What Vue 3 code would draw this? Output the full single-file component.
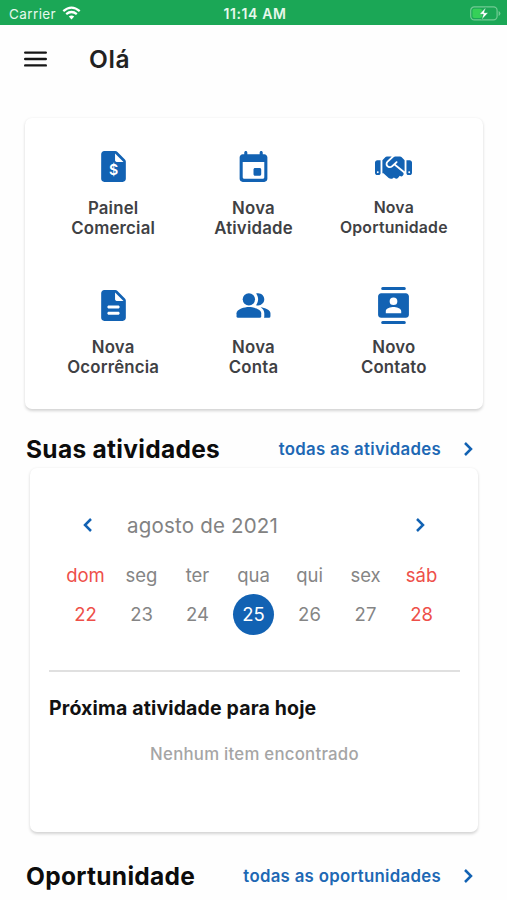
<template>
  <div class="app_container">
    <div class="status_bar">
      <div class="carrier">
        <span>Carrier</span>
        <svg class="wifi" viewBox="0 0 19 14">
          <path d="M9.5 13.6 12.2 10.6Q9.5 8.4 6.8 10.6Z" />
          <path class="arc" d="M4.2 8.2Q9.5 3.9 14.8 8.2M1.3 5.1Q9.5 -1.9 17.7 5.1" />
        </svg>
      </div>
      <div class="clock">11:14 AM</div>
      <div class="battery_box">
        <svg class="battery" viewBox="0 0 31 15">
          <rect class="shell" x=".7" y=".9" width="26.4" height="13" rx="3.6" />
          <path class="cap" d="M28.6 5v5q1.8-.6 1.8-2.5T28.6 5z" />
          <rect class="level" x="2.5" y="2.7" width="9.5" height="9.4" rx="1.8" />
          <path class="bolt" d="M15.8 1.4 9.4 8.3h3.9l-1.7 5.5 6.6-7.1h-4z" />
        </svg>
      </div>
    </div>

    <div class="header">
      <svg class="menu" viewBox="0 0 23 16">
        <path d="M1.2 1.6h20.6M1.2 8h20.6M1.2 14.4h20.6" />
      </svg>
      <h1>Olá</h1>
    </div>

    <div class="card shortcuts">
      <div class="shortcut" v-for="i in shortcuts" :key="i.icon">
        <svg class="icon" :viewBox="i.box || '0 0 24 24'">
          <path v-for="d in i.paths" :d="d" fill-rule="evenodd" />
          <text v-if="i.sign" x="12.1" y="17.6">{{ i.sign }}</text>
        </svg>
        <div class="label" :class="{ small: i.small }">{{ i.first }}<br />{{ i.second }}</div>
      </div>
    </div>

    <div class="section_title">
      <h2>Suas atividades</h2>
      <a>todas as atividades</a>
      <svg class="chevron" viewBox="0 0 10 16"><path d="M2 2l6 6-6 6" /></svg>
    </div>

    <div class="card agenda">
      <div class="month_row">
        <svg class="chevron" viewBox="0 0 10 16"><path d="M8 2L2 8l6 6" /></svg>
        <span class="month">agosto de 2021</span>
        <svg class="chevron" viewBox="0 0 10 16"><path d="M2 2l6 6-6 6" /></svg>
      </div>
      <div class="week">
        <div class="day" :class="{ weekend: d.weekend }" v-for="d in days" :key="d.num">
          <span class="day_name">{{ d.name }}</span>
          <span class="day_num" :class="{ active: d.num == selected }" @click="selected = d.num">{{ d.num }}</span>
        </div>
      </div>
      <div class="next_box">
        <h3>Próxima atividade para hoje</h3>
        <p>Nenhum item encontrado</p>
      </div>
    </div>

    <div class="section_title last">
      <h2>Oportunidade</h2>
      <a>todas as oportunidades</a>
      <svg class="chevron" viewBox="0 0 10 16"><path d="M2 2l6 6-6 6" /></svg>
    </div>
  </div>
</template>

<script setup>
import { ref } from 'vue';

const selected = ref(25)

const days = ['dom', 'seg', 'ter', 'qua', 'qui', 'sex', 'sáb'].map((name, i) => ({
  name,
  num: 22 + i,
  weekend: i == 0 || i == 6
}))

const sheet = 'M19.41 7.41l-4.83-4.83c-.37-.37-.88-.58-1.41-.58H6c-1.1 0-1.99.9-1.99 2L4 20c0 1.1.89 2 1.99 2H18c1.1 0 2-.9 2-2V8.83c0-.53-.21-1.04-.59-1.42z'
const fold = 'M13 8V3.5L18.5 9H14c-.55 0-1-.45-1-1z'

const shortcuts = [
  { icon: 'quote', first: 'Painel', second: 'Comercial', sign: '$', paths: [sheet + fold] },
  {
    icon: 'event', first: 'Nova', second: 'Atividade',
    paths: ['M16 13h-3c-.55 0-1 .45-1 1v3c0 .55.45 1 1 1h3c.55 0 1-.45 1-1v-3c0-.55-.45-1-1-1zm0-10v1H8V3c0-.55-.45-1-1-1s-1 .45-1 1v1H5c-1.11 0-1.99.9-1.99 2L3 20c0 1.1.89 2 2 2h14c1.1 0 2-.9 2-2V6c0-1.1-.9-2-2-2h-1V3c0-.55-.45-1-1-1s-1 .45-1 1zm2 17H6c-.55 0-1-.45-1-1V9h14v10c0 .55-.45 1-1 1z']
  },
  {
    icon: 'handshake', first: 'Nova', second: 'Oportunidade', small: true, box: '0 -84 640 640',
    paths: [
      'M434.7 64h-85.9c-8 0-15.7 3-21.6 8.4l-98.3 90c-.1.1-.2.3-.3.4-16.6 15.6-16.3 40.5-2.1 56 12.7 13.9 39.4 17.6 56.1 2.7.1-.1.3-.1.4-.2l79.9-73.2c6.5-5.9 16.7-5.5 22.6 1 6 6.5 5.5 16.6-1 22.6l-26.1 23.9L504 313.8c2.9 2.4 5.5 5 7.9 7.7V128l-54.6-54.6c-5.9-6-14.1-9.4-22.6-9.4z',
      'M483.9 338.7L334.6 217.5l-30 27.5c-29.7 27.1-75.2 24.5-101.7-4.4-26.9-29.4-24.8-74.9 4.4-101.7L289.1 64h-83.8c-8.5 0-16.6 3.4-22.6 9.4L128 128v223.9h18.3l90.5 81.9c27.4 22.3 67.7 18.1 90-9.3l.2-.2 17.9 15.5c15.9 13 39.4 10.5 52.3-5.4l31.4-38.6 5.4 4.4c13.7 11.1 33.9 9.1 45-4.7l9.5-11.7c11.2-13.8 9.1-33.9-4.6-45.1z',
      'M544 128.2v223.9c0 17.7 14.3 32 32 32h24c22 0 40-18 40-40V168c0-22-18-39.8-40-39.8zM592 352c-8.8 0-16-7.2-16-16s7.2-16 16-16 16 7.2 16 16-7.2 16-16 16z',
      'M40 384h24c17.7 0 32-14.3 32-32V128.2H40C18 128.2 0 146 0 168v176c0 22 18 40 40 40zM48 320c8.8 0 16 7.2 16 16s-7.2 16-16 16-16-7.2-16-16 7.2-16 16-16z'
    ]
  },
  {
    icon: 'description', first: 'Nova', second: 'Ocorrência',
    paths: [sheet + fold + 'M15 18H9c-.55 0-1-.45-1-1s.45-1 1-1h6c.55 0 1 .45 1 1s-.45 1-1 1zm0-4H9c-.55 0-1-.45-1-1s.45-1 1-1h6c.55 0 1 .45 1 1s-.45 1-1 1z']
  },
  {
    icon: 'people', first: 'Nova', second: 'Conta',
    paths: [
      'M16.67 13.13C18.04 14.06 19 15.32 19 17v2q0 .5-.2 1H22q1 0 1-1v-2c0-2.18-3.57-3.47-6.33-3.87z',
      'M15 12c2.21 0 4-1.79 4-4s-1.79-4-4-4c-.47 0-.91.1-1.33.24C14.5 5.27 15 6.58 15 8s-.5 2.73-1.33 3.76c.42.14.86.24 1.33.24z',
      'M9 4a4 4 0 1 0 0 8 4 4 0 0 0 0-8z',
      'M9 13c-2.67 0-8 1.34-8 4v2q0 1 1 1h14q1 0 1-1v-2c0-2.66-5.33-4-8-4z'
    ]
  },
  {
    icon: 'contacts', first: 'Novo', second: 'Contato',
    paths: [
      'M5 0h14q1 0 1 1t-1 1H5Q4 2 4 1t1-1zM5 22h14q1 0 1 1t-1 1H5q-1 0-1-1t1-1z',
      'M20 4H4c-1.1 0-2 .9-2 2v12c0 1.1.9 2 2 2h16c1.1 0 2-.9 2-2V6c0-1.1-.9-2-2-2zM12 6.75a2.5 2.5 0 1 1 0 5 2.5 2.5 0 0 1 0-5zM17 17H7v-1.5c0-1.67 3.33-2.5 5-2.5s5 .83 5 2.5z'
    ]
  }
]
</script>

<style>
body {
  background-color: #fefefe;
}
</style>

<style scoped>
* {
  margin: 0;
  padding: 0;
  box-sizing: border-box;
}

.app_container {
  height: 900px;
  overflow: hidden;
  background-color: #fefefe;
  font-family: Inter, "Liberation Sans", sans-serif;
}

.status_bar {
  display: grid;
  grid-template-columns: 1fr auto 1fr;
  align-items: center;
  height: 25px;
  padding: 2px 6px 0 9px;
  background-color: #1ba756;
  color: #e6f8ec;
  font-size: 13.5px;
}

.carrier {
  display: flex;
  align-items: center;
  gap: 6px;
  letter-spacing: .4px;
}

.wifi {
  width: 19px;
  height: 14px;
  margin-top: -2px;
  fill: #fff;
}

.wifi .arc {
  fill: none;
  stroke: #fff;
  stroke-width: 2.3;
}

.clock {
  font-size: 14px;
  font-weight: 600;
  letter-spacing: .6px;
}

.battery_box {
  display: flex;
  justify-content: flex-end;
}

.battery {
  width: 31px;
  height: 15px;
  margin-top: -1px;
}

.shell {
  fill: none;
  stroke: #72cb94;
  stroke-width: 1.2;
}

.cap {
  fill: #72cb94;
}

.level {
  fill: #35d058;
}

.bolt {
  fill: #fff;
  stroke: #1ba756;
  stroke-width: .5;
}

.header {
  display: flex;
  align-items: center;
  gap: 42px;
  height: 93px;
  padding: 0 24px 25px;
}

.menu {
  width: 23px;
  height: 16px;
  fill: none;
  stroke: #161616;
  stroke-width: 2.4;
  stroke-linecap: round;
}

h1 {
  color: #222;
  font-size: 24.5px;
  font-weight: 600;
  letter-spacing: .6px;
}

.card {
  background-color: #fff;
  border-radius: 7px;
  box-shadow: 0 1.5px 3px rgba(0, 0, 0, .17);
}

.shortcuts {
  display: grid;
  grid-template-columns: repeat(3, 1fr);
  align-content: start;
  row-gap: 50px;
  height: 291px;
  margin: 0 24px 0 25px;
  padding: 30px 19px 0 18px;
}

.shortcut {
  display: flex;
  flex-direction: column;
  align-items: center;
  gap: 12px;
}

.icon {
  width: 37px;
  height: 37px;
  fill: #1262b3;
}

.icon text {
  fill: #fff;
  font-size: 9.2px;
  font-weight: 600;
  text-anchor: middle;
}

.label {
  height: 40px;
  padding-top: 1px;
  color: #3f4144;
  font-size: 16.8px;
  font-weight: 600;
  line-height: 20.4px;
  letter-spacing: .2px;
  text-align: center;
}

.label.small {
  font-size: 15.8px;
  line-height: 20px;
  letter-spacing: .2px;
}

.section_title {
  display: flex;
  align-items: center;
  height: 59px;
  padding: 20px 34px 0 26px;
}

h2 {
  flex: 1;
  color: #0c0c0c;
  font-size: 24.5px;
  font-weight: 700;
  letter-spacing: .3px;
}

a {
  margin-right: 22px;
  color: #1d68b4;
  font-size: 16.8px;
  font-weight: 600;
  letter-spacing: .3px;
}

.chevron {
  width: 10px;
  height: 16px;
  fill: none;
  stroke: #1262b3;
  stroke-width: 2.5;
}

.agenda {
  height: 364px;
  margin: 0 29px 0 30px;
  padding-top: 44px;
}

.month_row {
  display: flex;
  align-items: center;
  height: 26px;
  padding: 0 53px;
}

.month {
  flex: 1;
  margin-left: 34px;
  color: #828282;
  font-size: 20.5px;
  letter-spacing: .2px;
}

.week {
  display: grid;
  grid-template-columns: repeat(7, 56px);
  justify-content: center;
  padding: 24px 1px 0 0;
}

.day {
  display: flex;
  flex-direction: column;
  align-items: center;
  color: #858585;
  font-size: 18.5px;
}

.day_name {
  line-height: 26px;
}

.day_num {
  width: 41px;
  height: 41px;
  margin-top: 6px;
  border-radius: 50%;
  line-height: 41px;
  text-align: center;
}

.weekend {
  color: #ee4f49;
}

.day_num.active {
  background-color: #1262b3;
  color: #fff;
}

.next_box {
  margin: 35px 18px 0 19px;
  padding-top: 23px;
  border-top: 2px solid #e0e0e0;
}

h3 {
  color: #111;
  font-size: 19.5px;
  font-weight: 700;
  line-height: 26px;
  letter-spacing: .15px;
}

p {
  margin-top: 21px;
  color: #a5a5a5;
  font-size: 16.8px;
  font-weight: 500;
  line-height: 24px;
  letter-spacing: .25px;
  text-align: center;
}

.last {
  height: 68px;
}
</style>
